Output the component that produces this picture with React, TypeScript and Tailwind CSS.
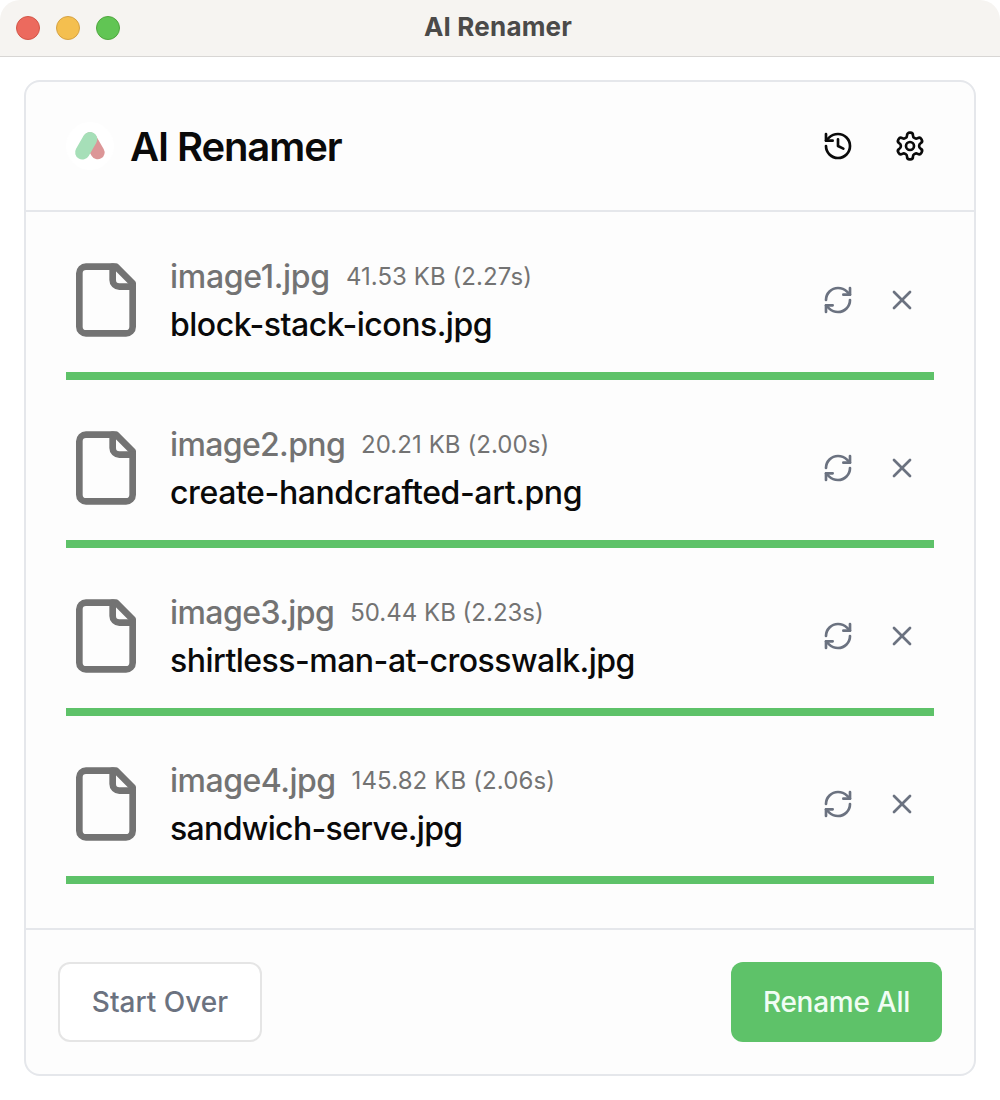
import { History, RefreshCw, X } from "lucide-react";

const files = [
  {
    name: "image1.jpg",
    nameClass: "tracking-[-0.3px]",
    size: "41.53 KB",
    time: "2.27s",
    sizeClass: "tracking-[0.06px]",
    newName: "block-stack-icons.jpg",
    newNameClass: "tracking-[-0.5px]",
  },
  {
    name: "image2.png",
    nameClass: "tracking-[-0.65px]",
    size: "20.21 KB",
    time: "2.00s",
    sizeClass: "tracking-[0.06px]",
    newName: "create-handcrafted-art.png",
    newNameClass: "tracking-[-0.4px]",
  },
  {
    name: "image3.jpg",
    nameClass: "tracking-[-0.58px]",
    size: "50.44 KB",
    time: "2.23s",
    sizeClass: "tracking-normal",
    newName: "shirtless-man-at-crosswalk.jpg",
    newNameClass: "tracking-[-0.52px]",
  },
  {
    name: "image4.jpg",
    nameClass: "tracking-[-0.5px]",
    size: "145.82 KB",
    time: "2.06s",
    sizeClass: "tracking-[0.12px]",
    newName: "sandwich-serve.jpg",
    newNameClass: "tracking-[-0.66px]",
  },
];

const Logo = () => {
  return (
    <svg className="size-12" viewBox="0 0 48 48" fill="none">
      <circle cx="24" cy="24" r="24" fill="#fff" />
      <path
        d="M24 17.2L31.7 30.4"
        stroke="#dc9697"
        strokeWidth="13.8"
        strokeLinecap="round"
      />
      <path
        d="M24 17.2L16.4 30.3"
        stroke="#a6dfb8"
        strokeWidth="14.6"
        strokeLinecap="round"
      />
    </svg>
  );
};

const SettingsIcon = () => {
  return (
    <svg
      className="size-8"
      viewBox="0 0 24 24"
      fill="none"
      stroke="currentColor"
      strokeWidth="2"
      strokeLinecap="round"
      strokeLinejoin="round"
    >
      <path d="M12.22 2h-.44a2 2 0 0 0-2 2v.18a2 2 0 0 1-1 1.73l-.43.25a2 2 0 0 1-2 0l-.15-.08a2 2 0 0 0-2.73.73l-.22.38a2 2 0 0 0 .73 2.73l.15.1a2 2 0 0 1 1 1.72v.51a2 2 0 0 1-1 1.74l-.15.09a2 2 0 0 0-.73 2.73l.22.38a2 2 0 0 0 2.73.73l.15-.08a2 2 0 0 1 2 0l.43.25a2 2 0 0 1 1 1.73V20a2 2 0 0 0 2 2h.44a2 2 0 0 0 2-2v-.18a2 2 0 0 1 1-1.73l.43-.25a2 2 0 0 1 2 0l.15.08a2 2 0 0 0 2.73-.73l.22-.39a2 2 0 0 0-.73-2.73l-.15-.08a2 2 0 0 1-1-1.74v-.5a2 2 0 0 1 1-1.74l.15-.09a2 2 0 0 0 .73-2.73l-.22-.38a2 2 0 0 0-2.73-.73l-.15.08a2 2 0 0 1-2 0l-.43-.25a2 2 0 0 1-1-1.73V4a2 2 0 0 0-2-2z" />
      <circle cx="12" cy="12" r="3" />
    </svg>
  );
};

const FileIcon = () => {
  return (
    <svg
      className="size-20 shrink-0 text-[#737373]"
      viewBox="0 0 24 24"
      fill="none"
      stroke="currentColor"
      strokeWidth="2"
      strokeLinecap="round"
      strokeLinejoin="round"
    >
      <path d="M15 2H6a2 2 0 0 0-2 2v16a2 2 0 0 0 2 2h12a2 2 0 0 0 2-2V7Z" />
      <path d="M14 2v4a2 2 0 0 0 2 2h4" />
    </svg>
  );
};

const TitleBar = () => {
  return (
    <div className="relative flex h-[57px] items-center justify-center rounded-t-[20px] border-b border-[#d8d6d4] bg-[#f6f4f1] pb-1">
      <div className="absolute left-4 top-4 flex gap-4">
        <span className="size-6 rounded-full border border-[#d35648] bg-[#ec6a5e]" />
        <span className="size-6 rounded-full border border-[#d6a243] bg-[#f4bf4f]" />
        <span className="size-6 rounded-full border border-[#50a73f] bg-[#61c554]" />
      </div>
      <span className="pr-1 text-[26px] font-bold tracking-[0.2px] text-[#4b4a49]">
        AI Renamer
      </span>
    </div>
  );
};

const App = () => {
  return (
    <div className="flex h-[1100px] w-[1000px] flex-col bg-white font-['Inter',sans-serif] text-[#0a0a0a]">
      <TitleBar />
      <div className="mx-6 mt-[23px] flex h-[996px] flex-col rounded-2xl border-2 border-[#e5e7eb] bg-[#fdfdfd]">
        <div className="flex h-[130px] items-center justify-between border-b-2 border-[#e5e7eb] pl-10 pr-12">
          <div className="flex items-center gap-4">
            <Logo />
            <h1 className="pt-0.5 text-[40px] font-semibold tracking-[-1.1px]">
              AI Renamer
            </h1>
          </div>
          <div className="flex items-center gap-10">
            <History className="size-8" />
            <SettingsIcon />
          </div>
        </div>

        <div className="flex flex-1 flex-col gap-4 px-10 pt-4">
          {files.map((file) => (
            <div
              key={file.name}
              className="flex h-[152px] items-center border-b-8 border-[#5ec269]"
            >
              <FileIcon />
              <div className="ml-6 flex-1 whitespace-nowrap pt-0.5 font-medium">
                <div className="flex h-12 items-center gap-4 text-[#737373]">
                  <span className={`text-[32px] ${file.nameClass}`}>
                    {file.name}
                  </span>
                  <span className={`text-2xl font-normal ${file.sizeClass}`}>
                    {file.size} ({file.time})
                  </span>
                </div>
                <div className={`text-[32px] leading-[48px] ${file.newNameClass}`}>
                  {file.newName}
                </div>
              </div>
              <div className="flex items-center gap-8 pr-4 text-[#6b7280]">
                <RefreshCw className="size-8" />
                <X className="size-8" />
              </div>
            </div>
          ))}
        </div>

        <div className="flex h-[146px] items-center justify-between border-t-2 border-[#e5e7eb] px-8">
          <button className="h-20 w-[204px] rounded-xl border-2 border-[#e5e5e5] bg-white text-[28px] font-medium text-[#6b7280]">
            Start Over
          </button>
          <button className="h-20 w-[211px] rounded-xl bg-[#5ec269] text-[28px] font-medium tracking-[-0.25px] text-[#f0fdf4]">
            Rename All
          </button>
        </div>
      </div>
    </div>
  );
};

export default App;
